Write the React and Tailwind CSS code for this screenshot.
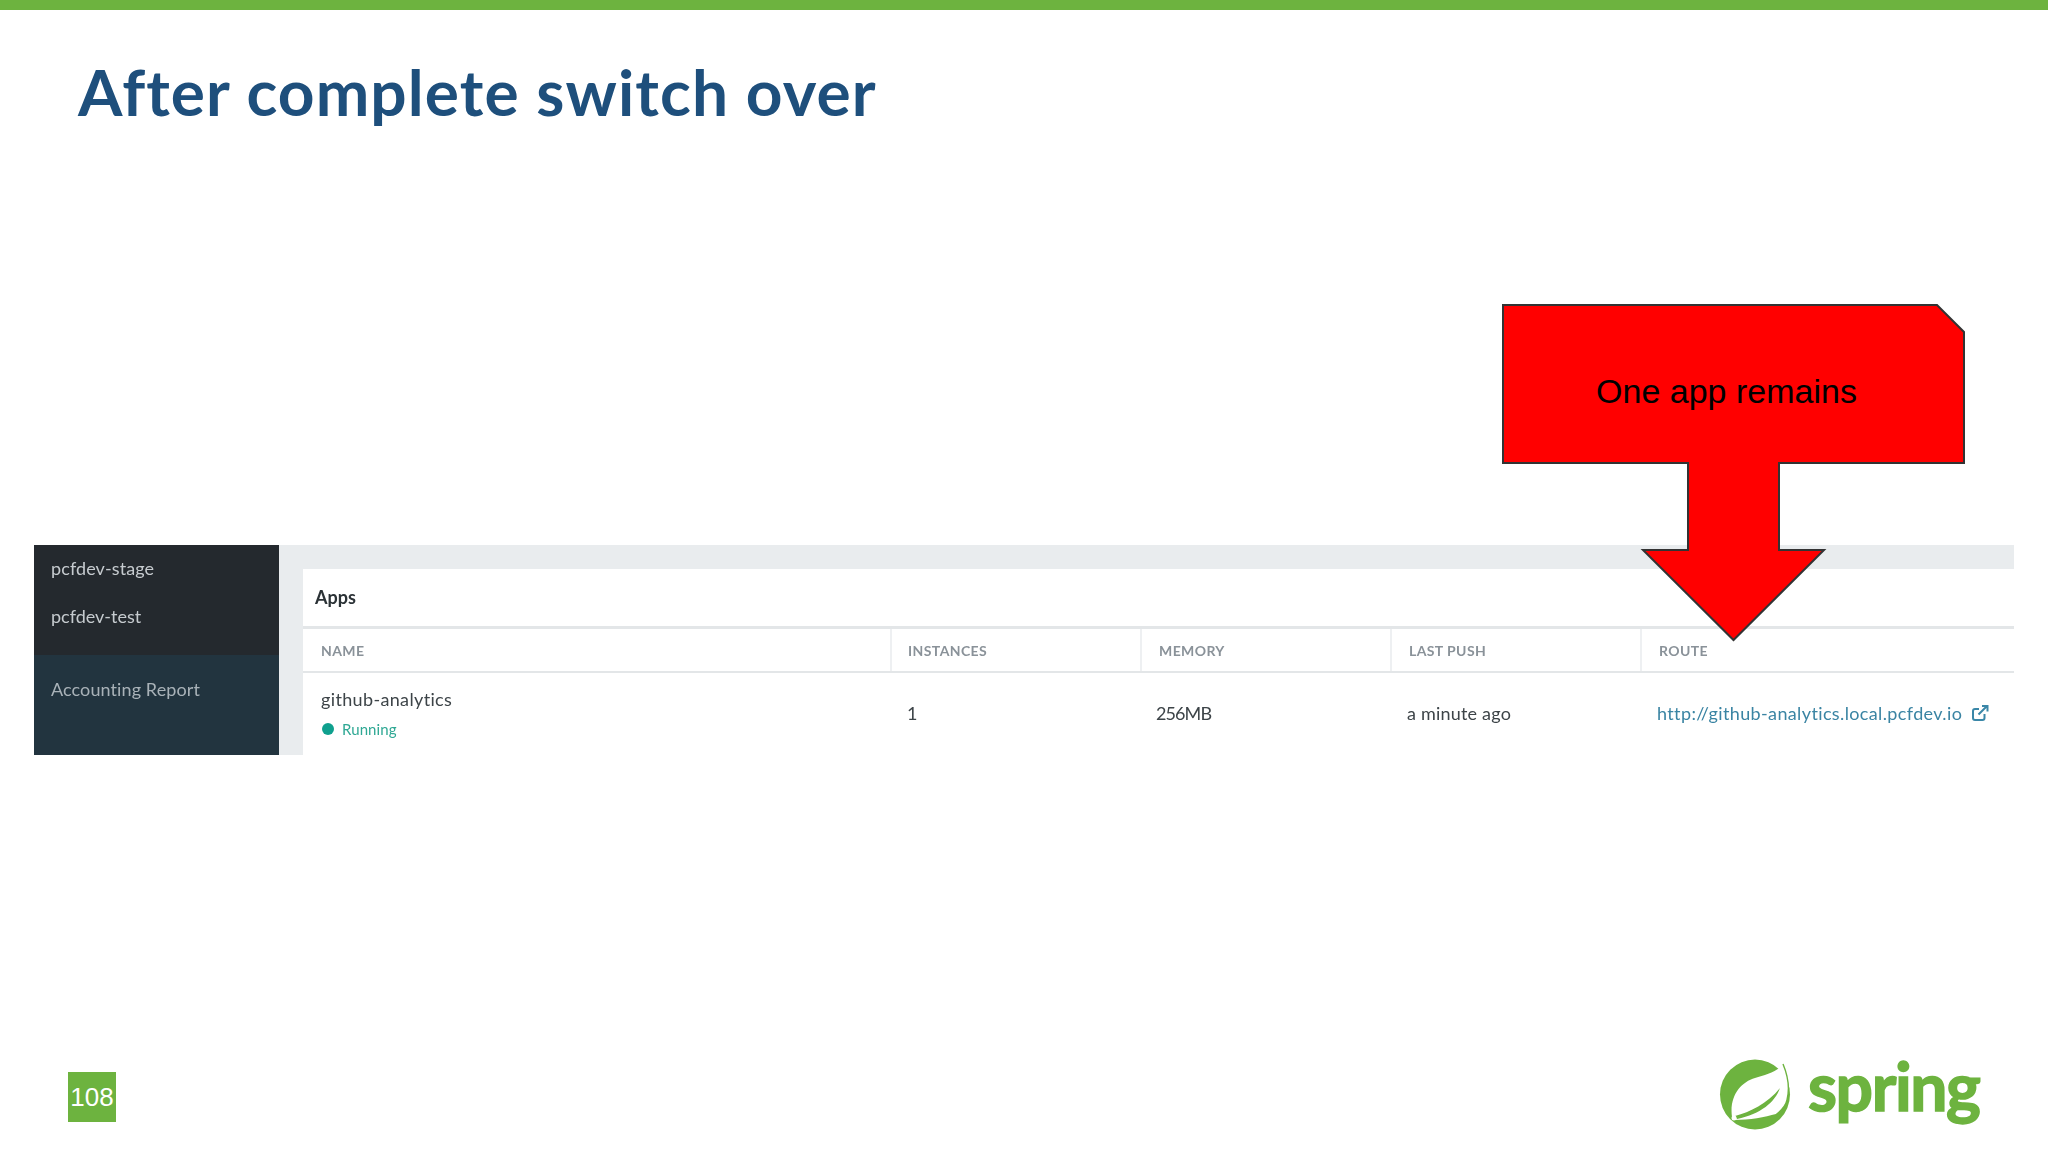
const sourceFont = "font-['Lato','Liberation_Sans',sans-serif]";

function SpringLogo() {
  return (
    <div className="flex items-start gap-[3px]">
      <svg width="90" height="90" viewBox="0 0 90 90">
        <circle cx="40" cy="44.500" r="35" fill="#6db33f" />
        <path d="M68 14C62 22 50 25 40 28C26 32 14 46 17 67L19 70C35 70 50 67 61 64C67 60 71 55 72 50C75 38 73 26 68 14Z" fill="#fff" />
        <path d="M68 14C73 26 75 38 72 50C71 55 67 60 61 65" fill="none" stroke="#6db33f" strokeWidth="1.4" />
        <path d="M20 66C35 62 52 54 65 38C60 52 46 64 22 69Z" fill="#6db33f" />
        <circle cx="19" cy="68" r="2.500" fill="#fff" />
      </svg>
      <span className="font-['Lato',sans-serif] font-bold text-[66px] leading-[72px] tracking-[-1.4px] text-[#6db33f] [-webkit-text-stroke:1.500px_#6db33f] blur-[0.4px]">
        spring
      </span>
    </div>
  );
}

function ExternalIcon() {
  return (
    <svg width="18" height="18" viewBox="0 0 18 18" fill="none" stroke="#3a87a8" strokeWidth="2">
      <path d="M13.500 10v4a2 2 0 0 1-2 2H4a2 2 0 0 1-2-2V7a2 2 0 0 1 2-2h4" />
      <path d="M7.500 10.500 16 2M11 2h5.500v5.500" />
    </svg>
  );
}

const columns = [
  { label: "NAME", width: "w-[587px]", pad: "pl-[18px]" },
  { label: "INSTANCES", width: "w-[250px]", pad: "pl-[16px]" },
  { label: "MEMORY", width: "w-[250px]", pad: "pl-[17px]" },
  { label: "LAST PUSH", width: "w-[250px]", pad: "pl-[17px]" },
  { label: "ROUTE", width: "flex-1", pad: "pl-[17px]" },
];

export default function App() {
  return (
    <div className="relative w-[2048px] h-[1152px] bg-white overflow-hidden">
      <div className="h-[10px] bg-[#6db33f]" />
      <h1 className="ml-[78px] mt-[43px] h-[78px] font-['Lato',sans-serif] font-bold text-[64px] leading-[78px] tracking-[1.1px] text-[#1e4f7c]">
        After complete switch over
      </h1>

      <div className={`mt-[414px] ml-[34px] w-[1980px] h-[210px] flex blur-[0.4px] ${sourceFont}`}>
        <div className="w-[245px] flex flex-col text-[18px] text-[#c6cbcf]">
          <div className="h-[110px] bg-[#24292e] pl-[17px] pt-[10px] flex flex-col gap-[22px]">
            <span className="leading-[26px] tracking-[0.1px]">pcfdev-stage</span>
            <span className="leading-[26px]">pcfdev-test</span>
          </div>
          <div className="flex-1 bg-[#22343f] pl-[17px] pt-[21px] leading-[26px] tracking-[0.1px] text-[#a9b2b8]">
            Accounting Report
          </div>
        </div>

        <div className="flex-1 bg-[#e9ecee] pt-[24px] pl-[24px] flex flex-col">
          <div className="h-[57px] bg-white flex items-center pl-[12px] font-bold text-[18px] text-[#2b3236]">
            Apps
          </div>
          <div className="h-[47px] bg-white border-t-[3px] border-[#e3e6e8] border-b-2 flex">
            {columns.map((col, i) => (
              <div
                key={col.label}
                className={`${col.width} ${col.pad} ${i > 0 ? "border-l-2 border-[#eef0f2]" : ""} flex items-center font-bold text-[14px] tracking-[0.4px] text-[#8a9299]`}
              >
                {col.label}
              </div>
            ))}
          </div>
          <div className="flex-1 bg-white flex items-center pb-[2px] text-[18px] text-[#3d4448]">
            <div className="w-[587px] pl-[18px] flex flex-col pb-[2px]">
              <span className="leading-[26px] tracking-[0.35px]">github-analytics</span>
              <span className="mt-[7px] flex items-center gap-[8px] text-[15px] leading-[20px] tracking-[0.1px] text-[#2fa894]">
                <span className="w-[12px] h-[12px] rounded-full bg-[#0fa08e] ml-[1px]" />
                Running
              </span>
            </div>
            <div className="w-[250px] pl-[17px]">1</div>
            <div className="w-[250px] pl-[16px] tracking-[-0.9px]">256MB</div>
            <div className="w-[250px] pl-[17px] tracking-[0.2px]">a minute ago</div>
            <div className="flex-1 pl-[17px] flex items-center gap-[9px] tracking-[0.37px] text-[#3a84a3]">
              http://github-analytics.local.pcfdev.io
              <ExternalIcon />
            </div>
          </div>
        </div>
      </div>

      {/* callout drawn over the table */}
      <div className="absolute left-[1500px] top-[302px] w-[330px]">
        <svg width="468" height="342" viewBox="0 0 468 342" fill="#ff0000" stroke="#333" strokeWidth="2">
          <path d="M3 3H437L464 30V161H279V248H324L233.500 338L143 248H188V161H3Z" />
        </svg>
        <div className="absolute left-[2px] top-[2px] w-[463px] h-[159px] flex items-center justify-center pr-[14px] pt-[16px] font-['Liberation_Sans',sans-serif] text-[34px] text-black">
          One app remains
        </div>
      </div>

      <div className="absolute left-[68px] top-[1072px] w-[48px] h-[50px] bg-[#6db33f] flex items-center justify-center font-['Liberation_Sans',sans-serif] text-[26px] text-white">
        108
      </div>
      <div className="absolute left-[1715px] top-[1050px]">
        <SpringLogo />
      </div>
    </div>
  );
}
